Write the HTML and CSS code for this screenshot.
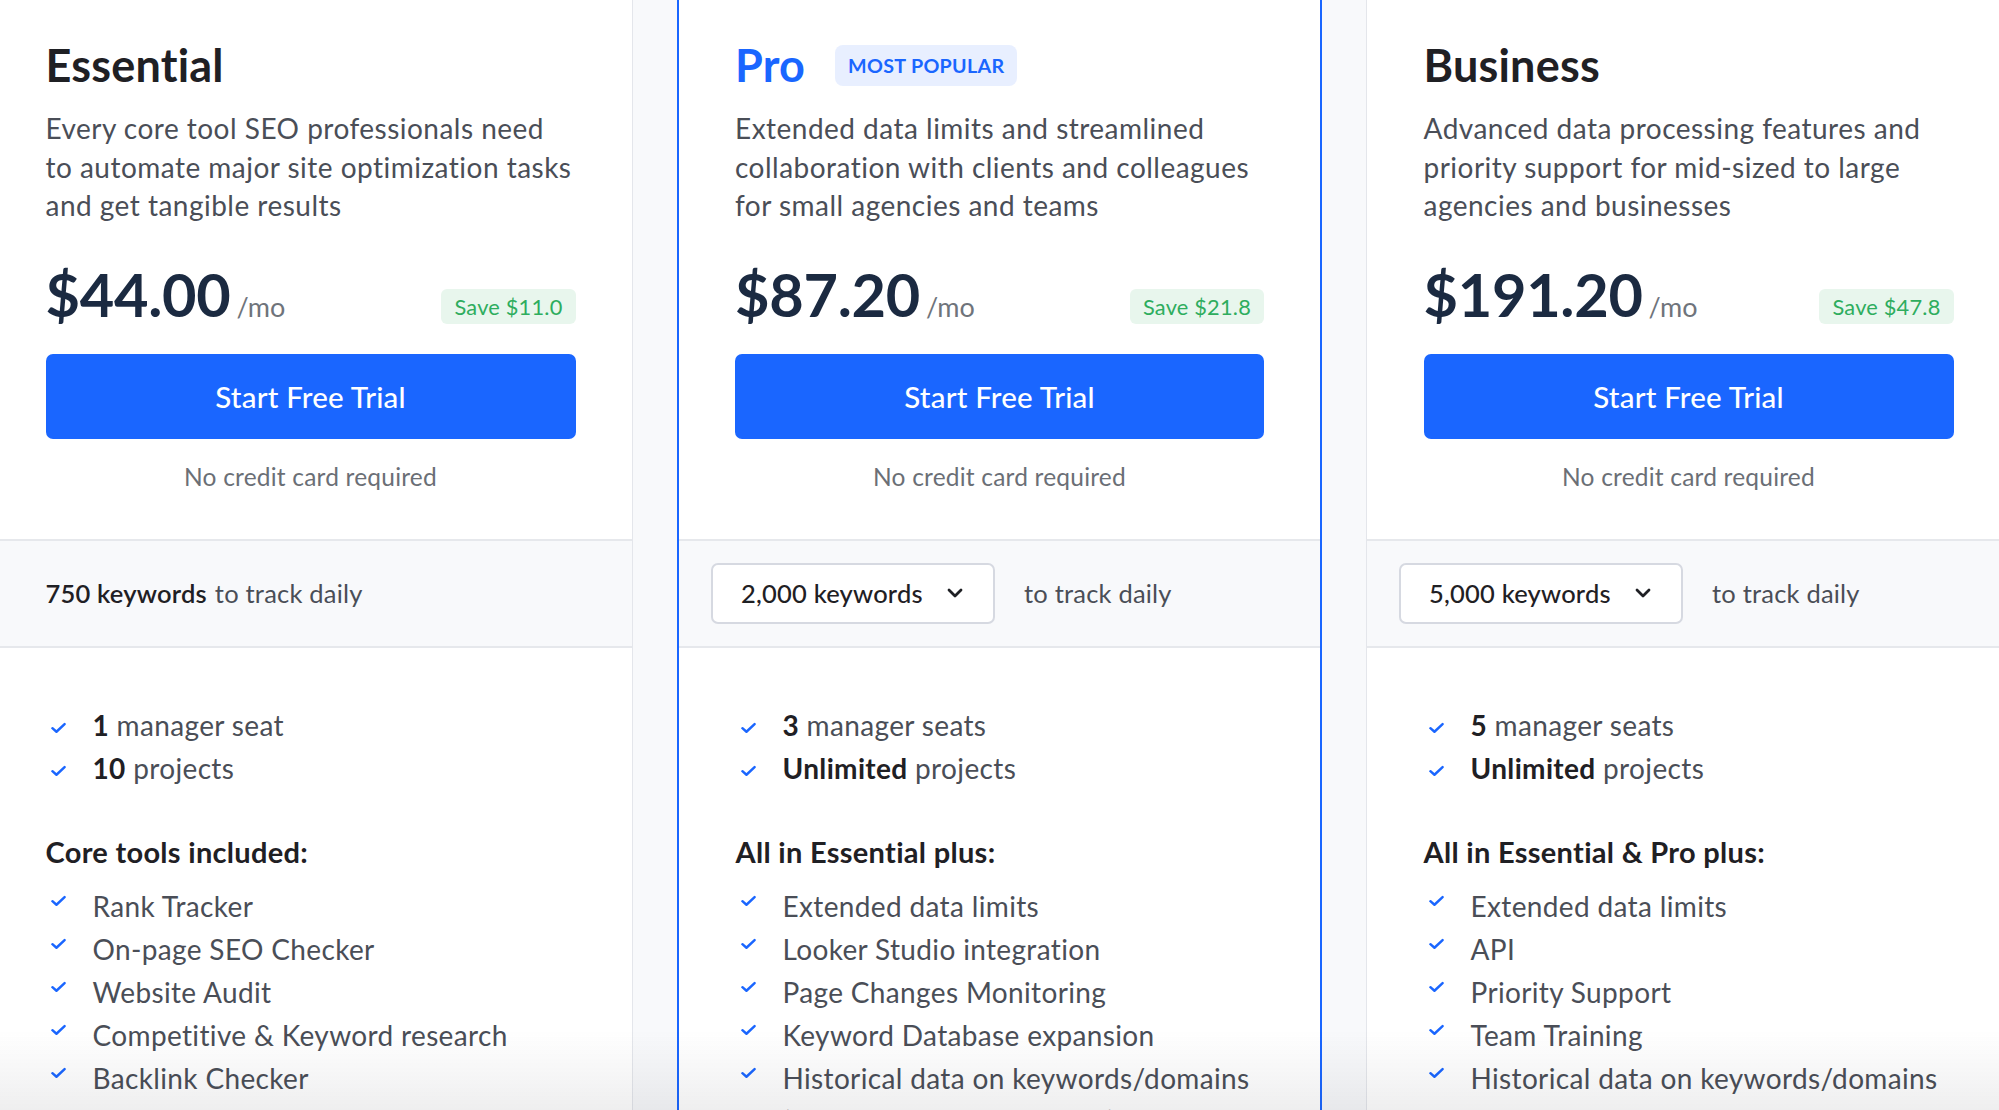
FILE: index.html
```html
<!DOCTYPE html>
<html lang="en">
<head>
<meta charset="utf-8">
<title>Pricing</title>
<link rel="stylesheet" href="styles.css">
</head>
<body>
<main class="plans">
  <section class="card">
    <div class="card-head">
      <h2 class="plan-name">Essential</h2>
      <p class="plan-desc">Every core tool SEO professionals need to automate major site optimization tasks and get tangible results</p>
      <div class="price-row">
        <span class="price">$44.00</span><span class="per">/mo</span>
        <span class="save">Save $11.0</span>
      </div>
      <button class="cta">Start Free Trial</button>
      <p class="note">No credit card required</p>
    </div>
    <div class="band">
      <span class="kw-fixed">750 keywords</span><span class="kw-text">to track daily</span>
    </div>
    <div class="features">
      <ul class="list list-main">
        <li><svg class="check" viewBox="0 0 16 12"><path d="M1.5 6.2 L5.8 10 L14.5 1.8"/></svg><span><b>1</b> manager seat</span></li>
        <li><svg class="check" viewBox="0 0 16 12"><path d="M1.5 6.2 L5.8 10 L14.5 1.8"/></svg><span><b>10</b> projects</span></li>
      </ul>
      <h3 class="list-title">Core tools included:</h3>
      <ul class="list list-tools">
        <li><svg class="check" viewBox="0 0 16 12"><path d="M1.5 6.2 L5.8 10 L14.5 1.8"/></svg><span>Rank Tracker</span></li>
        <li><svg class="check" viewBox="0 0 16 12"><path d="M1.5 6.2 L5.8 10 L14.5 1.8"/></svg><span>On-page SEO Checker</span></li>
        <li><svg class="check" viewBox="0 0 16 12"><path d="M1.5 6.2 L5.8 10 L14.5 1.8"/></svg><span>Website Audit</span></li>
        <li><svg class="check" viewBox="0 0 16 12"><path d="M1.5 6.2 L5.8 10 L14.5 1.8"/></svg><span>Competitive &amp; Keyword research</span></li>
        <li><svg class="check" viewBox="0 0 16 12"><path d="M1.5 6.2 L5.8 10 L14.5 1.8"/></svg><span>Backlink Checker</span></li>
        <li><svg class="check" viewBox="0 0 16 12"><path d="M1.5 6.2 L5.8 10 L14.5 1.8"/></svg><span>SEO Reports</span></li>
      </ul>
    </div>
  </section>

  <section class="card card-pro">
    <div class="card-head">
      <div class="name-row">
        <h2 class="plan-name pro-name">Pro</h2>
        <span class="popular">MOST POPULAR</span>
      </div>
      <p class="plan-desc">Extended data limits and streamlined collaboration with clients and colleagues for small agencies and teams</p>
      <div class="price-row">
        <span class="price">$87.20</span><span class="per">/mo</span>
        <span class="save">Save $21.8</span>
      </div>
      <button class="cta">Start Free Trial</button>
      <p class="note">No credit card required</p>
    </div>
    <div class="band">
      <div class="select"><span>2,000 keywords</span><svg class="chev" viewBox="0 0 16 10"><path d="M2 2 L8 8 L14 2"/></svg></div>
      <span class="kw-text">to track daily</span>
    </div>
    <div class="features">
      <ul class="list list-main">
        <li><svg class="check" viewBox="0 0 16 12"><path d="M1.5 6.2 L5.8 10 L14.5 1.8"/></svg><span><b>3</b> manager seats</span></li>
        <li><svg class="check" viewBox="0 0 16 12"><path d="M1.5 6.2 L5.8 10 L14.5 1.8"/></svg><span><b>Unlimited</b> projects</span></li>
      </ul>
      <h3 class="list-title">All in Essential plus:</h3>
      <ul class="list list-tools">
        <li><svg class="check" viewBox="0 0 16 12"><path d="M1.5 6.2 L5.8 10 L14.5 1.8"/></svg><span>Extended data limits</span></li>
        <li><svg class="check" viewBox="0 0 16 12"><path d="M1.5 6.2 L5.8 10 L14.5 1.8"/></svg><span>Looker Studio integration</span></li>
        <li><svg class="check" viewBox="0 0 16 12"><path d="M1.5 6.2 L5.8 10 L14.5 1.8"/></svg><span>Page Changes Monitoring</span></li>
        <li><svg class="check" viewBox="0 0 16 12"><path d="M1.5 6.2 L5.8 10 L14.5 1.8"/></svg><span>Keyword Database expansion</span></li>
        <li><svg class="check" viewBox="0 0 16 12"><path d="M1.5 6.2 L5.8 10 L14.5 1.8"/></svg><span>Historical data on keywords/domains</span></li>
        <li><svg class="check" viewBox="0 0 16 12"><path d="M1.5 6.2 L5.8 10 L14.5 1.8"/></svg><span>(for all projects in account)</span></li>
      </ul>
    </div>
  </section>

  <section class="card">
    <div class="card-head">
      <h2 class="plan-name">Business</h2>
      <p class="plan-desc">Advanced data processing features and priority support for mid-sized to large agencies and businesses</p>
      <div class="price-row">
        <span class="price">$191.20</span><span class="per">/mo</span>
        <span class="save">Save $47.8</span>
      </div>
      <button class="cta">Start Free Trial</button>
      <p class="note">No credit card required</p>
    </div>
    <div class="band">
      <div class="select"><span>5,000 keywords</span><svg class="chev" viewBox="0 0 16 10"><path d="M2 2 L8 8 L14 2"/></svg></div>
      <span class="kw-text">to track daily</span>
    </div>
    <div class="features">
      <ul class="list list-main">
        <li><svg class="check" viewBox="0 0 16 12"><path d="M1.5 6.2 L5.8 10 L14.5 1.8"/></svg><span><b>5</b> manager seats</span></li>
        <li><svg class="check" viewBox="0 0 16 12"><path d="M1.5 6.2 L5.8 10 L14.5 1.8"/></svg><span><b>Unlimited</b> projects</span></li>
      </ul>
      <h3 class="list-title">All in Essential &amp; Pro plus:</h3>
      <ul class="list list-tools">
        <li><svg class="check" viewBox="0 0 16 12"><path d="M1.5 6.2 L5.8 10 L14.5 1.8"/></svg><span>Extended data limits</span></li>
        <li><svg class="check" viewBox="0 0 16 12"><path d="M1.5 6.2 L5.8 10 L14.5 1.8"/></svg><span>API</span></li>
        <li><svg class="check" viewBox="0 0 16 12"><path d="M1.5 6.2 L5.8 10 L14.5 1.8"/></svg><span>Priority Support</span></li>
        <li><svg class="check" viewBox="0 0 16 12"><path d="M1.5 6.2 L5.8 10 L14.5 1.8"/></svg><span>Team Training</span></li>
        <li><svg class="check" viewBox="0 0 16 12"><path d="M1.5 6.2 L5.8 10 L14.5 1.8"/></svg><span>Historical data on keywords/domains</span></li>
        <li><svg class="check" viewBox="0 0 16 12"><path d="M1.5 6.2 L5.8 10 L14.5 1.8"/></svg><span>Lead Generation</span></li>
      </ul>
    </div>
  </section>
</main>
<div class="fade"></div>
</body>
</html>
```

FILE: styles.css
```css
* { box-sizing: border-box; }

html, body {
  margin: 0;
  padding: 0;
  height: 1110px;
  overflow: hidden;
  background: #f8f9fb;
  font-family: "Lato", "Open Sans", sans-serif;
  color: #1f2024;
}

.plans {
  display: grid;
  grid-template-columns: 645px 645px 645px;
  column-gap: 44px;
  margin-left: -12px;
  align-items: start;
}

.card {
  background: #fff;
  border: 1.5px solid #e4e6eb;
  border-top: none;
  min-height: 1200px;
}

.card-pro {
  border-color: #1a66ff;
  border-width: 2px;
}

.card-head {
  padding: 38px 56.5px 48px;
}

.card-pro .card-head { padding-left: 56px; padding-right: 56px; }

.name-row {
  display: flex;
  align-items: center;
  gap: 30px;
}

.plan-name {
  margin: 0;
  font-size: 45px;
  line-height: 54px;
  font-weight: 700;
  color: #1f2024;
  letter-spacing: 0.2px;
}

.pro-name { color: #1a66ff; }

.popular {
  display: inline-block;
  background: #e8efff;
  color: #1a66ff;
  font-size: 19.7px;
  font-weight: 700;
  letter-spacing: 0.3px;
  padding: 0 13px;
  height: 41px;
  line-height: 41px;
  border-radius: 8px;
}

.plan-desc {
  margin: 17px 0 0;
  font-size: 28px;
  line-height: 38.5px;
  color: #4a4e57;
  letter-spacing: 0.48px;
}

.price-row {
  display: flex;
  align-items: baseline;
  margin-top: 34px;
}

.price {
  font-size: 59.5px;
  line-height: 70px;
  font-weight: 700;
  color: #1b2a41;
  letter-spacing: -0.3px;
}

.per {
  font-size: 27px;
  color: #6f747b;
  margin-left: 6px;
}

.save {
  margin-left: auto;
  align-self: flex-end;
  margin-bottom: 5px;
  background: #e8f6ed;
  color: #2ead5e;
  font-size: 21.8px;
  height: 35px;
  line-height: 35px;
  padding: 0 13px;
  border-radius: 6px;
  letter-spacing: 0.2px;
}

.cta {
  display: block;
  width: 100%;
  height: 85px;
  margin-top: 25px;
  border: none;
  border-radius: 7px;
  background: #1a66ff;
  color: #fff;
  font-family: inherit;
  font-size: 29.5px;
  font-weight: 500;
  letter-spacing: 0.2px;
  cursor: pointer;
}

.note {
  margin: 24px 0 0;
  text-align: center;
  font-size: 24.5px;
  line-height: 28px;
  color: #6b6f76;
  letter-spacing: 0.2px;
}

.band {
  height: 109px;
  display: flex;
  align-items: center;
  padding: 0 56.5px;
  background: #f8f9fb;
  border-top: 2px solid #e6e8ec;
  border-bottom: 2px solid #e6e8ec;
  font-size: 25.5px;
  letter-spacing: 0.2px;
}

.kw-fixed {
  font-weight: 600;
  color: #1f2024;
  margin-right: 8px;
}

.kw-text { color: #4a4e57; }

.select {
  display: flex;
  align-items: center;
  justify-content: space-between;
  width: 284px;
  height: 61px;
  margin-left: -24.5px;
  margin-right: 29px;
  padding: 0 30px 0 28px;
  background: #fff;
  border: 2.5px solid #d6d9e1;
  border-radius: 7px;
  color: #1f2024;
  font-weight: 500;
}

.chev {
  width: 16px;
  height: 10px;
  fill: none;
  stroke: #1f2024;
  stroke-width: 2.8;
  stroke-linecap: round;
  stroke-linejoin: round;
}

.features {
  padding: 56px 56.5px 0;
}

.list {
  list-style: none;
  margin: 0;
  padding: 0;
}

.list li {
  display: flex;
  align-items: center;
  height: 43px;
  font-size: 28px;
  color: #4a4e57;
  letter-spacing: 0.35px;
  white-space: nowrap;
}

.list b {
  font-weight: 700;
  color: #1f2024;
}

.check {
  flex: none;
  width: 15px;
  height: 12px;
  margin-left: 5px;
  margin-right: 27px;
  fill: none;
  stroke: #1a66ff;
  stroke-width: 2.6;
  stroke-linecap: round;
  stroke-linejoin: round;
}

.list-main .check { margin-top: 6px; }
.list-tools .check { margin-top: -10px; }

.list-title {
  margin: 43px 0 14px;
  font-size: 29px;
  line-height: 38px;
  font-weight: 700;
  color: #1f2024;
  letter-spacing: 0.3px;
}

.fade {
  position: fixed;
  left: 0;
  right: 0;
  bottom: 0;
  height: 80px;
  background: linear-gradient(to bottom, rgba(30, 30, 40, 0) 0%, rgba(30, 30, 40, 0.035) 50%, rgba(30, 30, 40, 0.075) 100%);
  pointer-events: none;
}
```
